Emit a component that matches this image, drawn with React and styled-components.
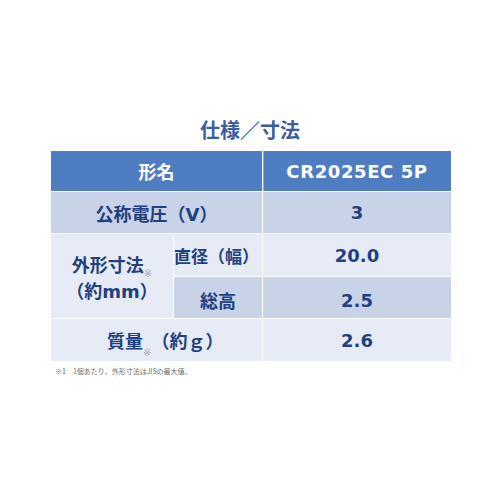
import React from 'react'
import styled, { createGlobalStyle } from 'styled-components'

const Global = createGlobalStyle`
  body {
    margin: 0;
    background: #ffffff;
    font-family: "DejaVu Sans", "Noto Sans CJK JP", sans-serif;
  }
`

const Page = styled.div`
  width: 500px;
  height: 500px;
  box-sizing: border-box;
  padding: 117px 51px 0 51px;
  display: flex;
  flex-direction: column;
`

const Title = styled.h2`
  margin: 0 0 9px 0;
  height: 25px;
  text-align: center;
  font-size: 20px;
  line-height: 25px;
  font-weight: 700;
  color: #3a5ca3;
  font-family: "Noto Sans CJK JP", sans-serif;
`

const Table = styled.div`
  display: grid;
  grid-template-columns: 122px 88px 188px;
  grid-template-rows: 40px 41px 42px 41px 42px;
  gap: 1px;
  background: #ffffff;
`

const Cell = styled.div`
  display: flex;
  align-items: center;
  justify-content: ${p => p.$align || 'center'};
  padding-left: ${p => p.$indent || 0}px;
  padding-top: ${p => p.$drop || 0}px;
  box-sizing: border-box;
  background: ${p => p.$bg};
  color: ${p => p.$head ? '#ffffff' : '#223f7e'};
  font-size: ${p => p.$size || 18}px;
  font-weight: 700;
  grid-column: ${p => p.$col || 'auto'};
  grid-row: ${p => p.$row || 'auto'};
  white-space: nowrap;
`

const HeadDivider = styled(Cell)`
  box-shadow: inset 1px 0 0 rgba(255, 255, 255, 0.35);
  letter-spacing: 0.6px;
`

const Stack = styled.div`
  display: flex;
  flex-direction: column;
  align-items: center;
  line-height: 23px;
  padding-top: 4px;
`

const Mark = styled.span`
  position: relative;
  top: ${p => p.$shift}px;
  font-size: 10px;
  font-weight: 400;
  color: ${p => p.$faint ? '#eef1f8' : '#9aa6c4'};
`

const Note = styled.p`
  margin: 5px 0 0 4px;
  font-size: 7px;
  color: #6a6a6a;
  font-family: "Noto Sans CJK JP", sans-serif;
`

const BLUE = '#4f7dc1'
const MID = '#c9d3e8'
const LIGHT = '#e7ebf5'

export default function App() {
  return (
    <>
      <Global />
      <Page>
        <Title>仕様／寸法</Title>
        <Table>
          <Cell $head $bg={BLUE} $col="1 / 3">形名</Cell>
          <HeadDivider $head $bg={BLUE}>CR2025EC 5P</HeadDivider>

          <Cell $bg={MID} $col="1 / 3">公称電圧（V）</Cell>
          <Cell $bg={MID}>3</Cell>

          <Cell $bg={LIGHT} $row="3 / 5">
            <Stack>
              <span>外形寸法<Mark $shift={5}>※</Mark></span>
              <span>（約mm）</span>
            </Stack>
          </Cell>
          <Cell $bg={LIGHT} $align="flex-start" $size={17}>直径（幅）</Cell>
          <Cell $bg={LIGHT}>20.0</Cell>
          <Cell $bg={MID} $drop={5}>総高</Cell>
          <Cell $bg={MID} $drop={5}>2.5</Cell>

          <Cell $bg={LIGHT} $col="1 / 3" $indent={26}>
            <span>
              質量<Mark $shift={8}>※</Mark>（約ｇ）<Mark $shift={-5} $faint>※</Mark>
            </span>
          </Cell>
          <Cell $bg={LIGHT}>2.6</Cell>
        </Table>
        <Note>※1　1個あたり。外形寸法はJISの最大値。</Note>
      </Page>
    </>
  )
}
